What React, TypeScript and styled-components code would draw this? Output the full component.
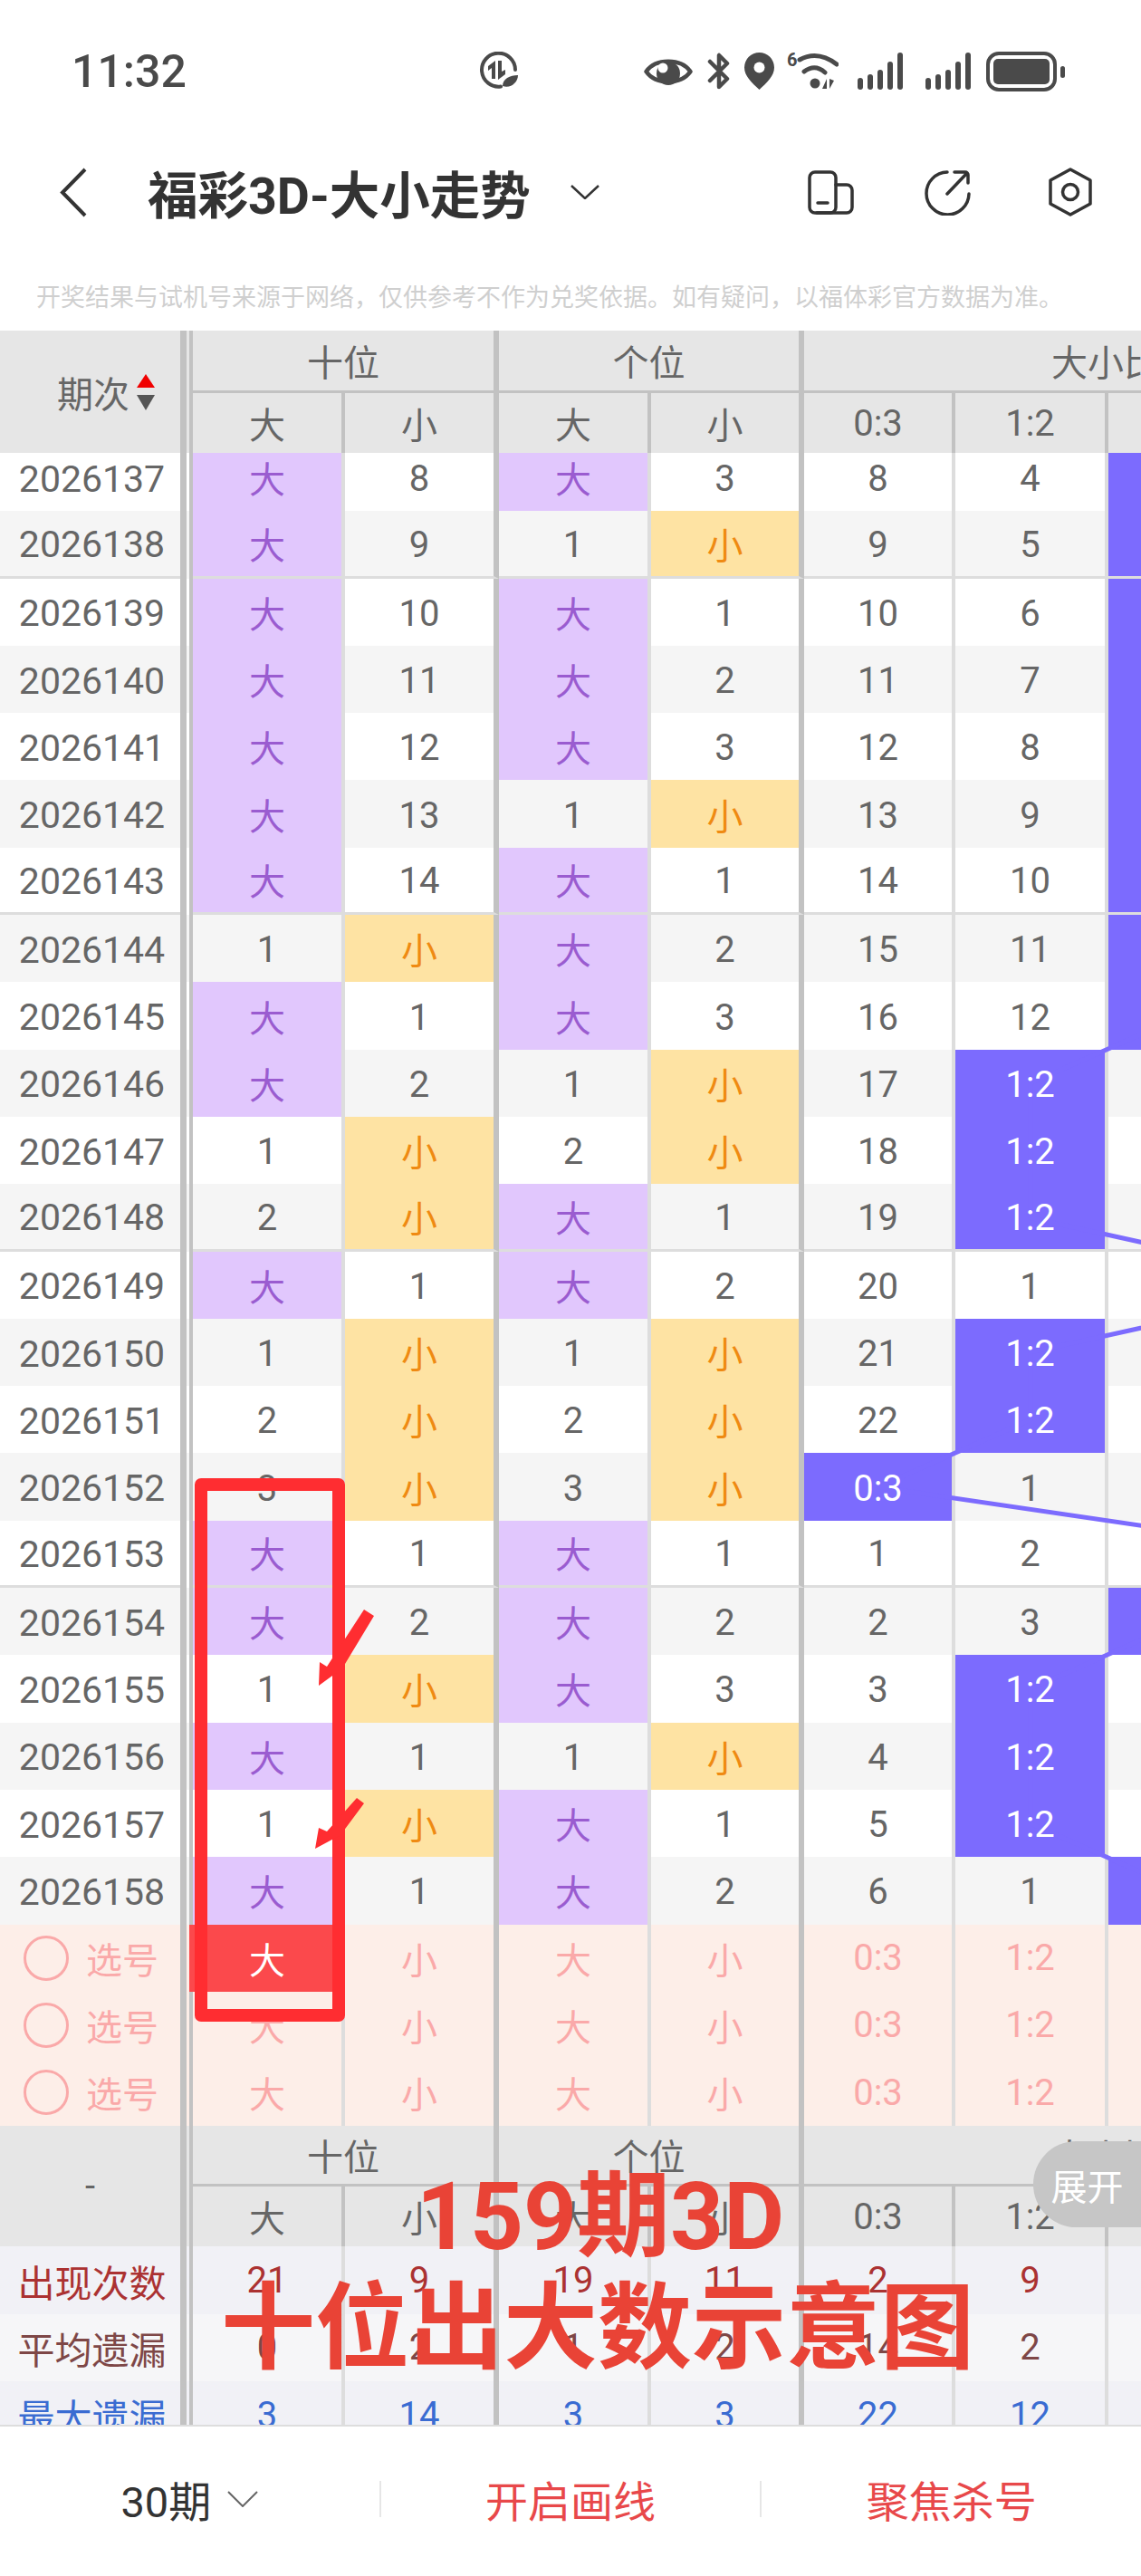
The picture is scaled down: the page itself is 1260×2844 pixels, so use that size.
import React from 'react';
import styled, {createGlobalStyle} from 'styled-components';

const GlobalStyle = createGlobalStyle`
  html, body {
    margin: 0;
    padding: 0;
    background: #fff;
    font-family: Roboto, "Noto Sans CJK SC", sans-serif;
  }
`
const TRACKS = '199px 14px 168px 170px 168px 169px 167px 169px 168px 168px'
const ROW_H = 74.3

const Page = styled.div`
  position: relative;
  width: 1260px;
  height: 2844px;
  display: flex;
  flex-direction: column;
  overflow: hidden;
  background: #fff;
`
const StatusBar = styled.div`
  height: 157px;
  display: flex;
  align-items: center;
  padding: 0 84px 0 79px;
  color: #4a4a4a;
`
const Time = styled.div`
  font-size: 50px;
  font-weight: 500;
  line-height: 60px;
  width: 128px;
  white-space: nowrap;
`
const Recycle = styled.svg`
  margin-left: 322px;
  width: 44px;
  height: 44px;
`
const StatusIcons = styled.div`
  margin-left: auto;
  display: flex;
  align-items: center;
  gap: 16px;
`
const Nav = styled.div`
  height: 110px;
  display: flex;
  align-items: center;
  padding: 0 53px 0 66px;
`
const Title = styled.div`
  margin-left: 66px;
  font-size: 55.5px;
  font-weight: 700;
  color: #333;
  white-space: nowrap;
`
const NavActions = styled.div`
  margin-left: auto;
  display: flex;
  align-items: center;
`
const Notice = styled.div`
  height: 58px;
  padding: 30px 0 0 40px;
  margin-bottom: 10px;
  display: flex;
  align-items: center;
  font-size: 27px;
  color: #cfcfcf;
  white-space: nowrap;
`
const Table = styled.div`
  flex: 1;
  min-height: 0;
  overflow: hidden;
`
const HeadGrid = styled.div`
  position: relative;
  z-index: 5;
  display: grid;
  grid-template-columns: ${TRACKS};
  grid-template-rows: ${p => p.$top}px 66px;
  width: 1400px;
  background: #e6e6e6;
  color: #666;
  font-size: 40px;
`
const HeadLeft = styled.div`
  grid-row: span 2;
  display: flex;
  align-items: center;
  padding-left: ${p => p.$pad || 0}px;
  justify-content: ${p => (p.$pad ? 'flex-start' : 'center')};
  gap: 8px;
`
const Gutter = styled.div`
  box-sizing: border-box;
  border-left: 7px solid #c2c2c2;
  border-right: 4px solid #c2c2c2;
  grid-row: ${p => (p.$tall ? 'span 2' : 'auto')};
`
const Band = styled.div`
  grid-column: span ${p => p.$span};
  box-sizing: border-box;
  display: flex;
  align-items: center;
  justify-content: center;
  border-bottom: 3px solid #c2c2c2;
  border-right: 6px solid #c2c2c2;
`
const Sub = styled.div`
  box-sizing: border-box;
  display: flex;
  align-items: center;
  justify-content: center;
  border-right: ${p => (p.$thick ? '6px' : '4px')} solid #c2c2c2;
`
const Body = styled.div`
  position: relative;
  margin-top: -10px;
`
const ChartLine = styled.svg`
  position: absolute;
  left: 0;
  top: 0;
  z-index: 1;
`
const Row = styled.div`
  display: grid;
  grid-template-columns: ${TRACKS};
  width: 1400px;
  height: ${ROW_H}px;
  background: ${p => p.$bg};
  font-size: 40px;
`
const Period = styled.div`
  box-sizing: border-box;
  display: flex;
  align-items: center;
  justify-content: center;
  padding-left: 4px;
  padding-top: ${p => (p.$digit ? 3 : 0)}px;
  font-size: 41px;
  color: ${p => p.$color || '#666'};
  border-bottom: ${p => (p.$end ? '3px solid #ddd' : 'none')};
`
const TONES = {
    plain: {bg: 'transparent', fg: '#666'},
    big: {bg: '#e1c7fd', fg: '#9a5cd0'},
    small: {bg: '#fee3a3', fg: '#ef8a12'},
    ratio: {bg: '#7c6bfe', fg: '#fff'},
    picked: {bg: '#fb494c', fg: '#fff'},
}
const Cell = styled.div`
  box-sizing: border-box;
  display: flex;
  align-items: center;
  justify-content: center;
  padding-top: ${p => (p.$digit ? 3 : 0)}px;
  background: ${p => TONES[p.$tone].bg};
  color: ${p => p.$color || TONES[p.$tone].fg};
  border-right: ${p => (p.$thick ? '6px solid #c2c2c2' : '4px solid #ddd')};
  border-bottom: ${p => (p.$end ? '3px solid #ddd' : 'none')};
  box-shadow: ${p => (p.$tone === 'picked' ? '-4px 0 0 #fb494c' : 'none')};
  >span {
    position: relative;
    z-index: 2;
  }
`
const PickLabel = styled.div`
  display: flex;
  align-items: center;
  gap: 19px;
  padding-left: 26px;
  color: #faa9a9;
  font-size: 40px;
`
const Ring = styled.div`
  box-sizing: border-box;
  width: 50px;
  height: 50px;
  border-radius: 50%;
  border: 3px solid #faa9a9;
`
const BottomBar = styled.div`
  position: relative;
  z-index: 6;
  flex: none;
  box-sizing: border-box;
  height: 167px;
  padding-bottom: 6px;
  border-top: 2px solid #ddd;
  background: #fff;
  display: flex;
  align-items: center;
`
const BottomItem = styled.div`
  flex: 1;
  display: flex;
  align-items: center;
  justify-content: center;
  gap: 18px;
  font-size: 47px;
  color: ${p => p.$color};
`
const Divider = styled.div`
  width: 2px;
  height: 40px;
  background: #e6e6e6;
`
const RedBox = styled.div`
  position: absolute;
  z-index: 7;
  left: 215px;
  top: 1632px;
  width: 166px;
  height: 600px;
  box-sizing: border-box;
  border: 14px solid #ff2d31;
  border-radius: 7px;
`
const Marks = styled.svg`
  position: absolute;
  z-index: 7;
  left: 0;
  top: 0;
`
const Caption = styled.div`
  position: absolute;
  z-index: 7;
  left: 240px;
  top: 2388px;
  width: 840px;
  text-align: center;
  color: #e94336;
  font-weight: 700;
`
const CaptionLine = styled.div`
  font-size: ${p => p.$size}px;
  line-height: ${p => p.$lh}px;
  white-space: nowrap;
`
const Expand = styled.div`
  position: absolute;
  z-index: 6;
  right: 0;
  top: 2364px;
  width: 119px;
  height: 95px;
  border-radius: 48px 0 0 48px;
  background: #c6c6c6;
  color: #fff;
  font-size: 40px;
  display: flex;
  align-items: center;
  justify-content: center;
`

// 走势数据：十位大小 个位大小 0:3 1:2 2:1 3:0
const RAW = [
    '大 8 大 3 8 4 2:1 1',
    '大 9 1 小 9 5 2:1 2',
    '大 10 大 1 10 6 2:1 3',
    '大 11 大 2 11 7 2:1 4',
    '大 12 大 3 12 8 2:1 5',
    '大 13 1 小 13 9 2:1 6',
    '大 14 大 1 14 10 2:1 7',
    '1 小 大 2 15 11 2:1 8',
    '大 1 大 3 16 12 2:1 9',
    '大 2 1 小 17 1:2 1 10',
    '1 小 2 小 18 1:2 2 11',
    '2 小 大 1 19 1:2 3 12',
    '大 1 大 2 20 1 4 3:0',
    '1 小 1 小 21 1:2 5 1',
    '2 小 2 小 22 1:2 6 2',
    '3 小 3 小 0:3 1 7 3',
    '大 1 大 1 1 2 8 3:0',
    '大 2 大 2 2 3 2:1 1',
    '1 小 大 3 3 1:2 1 2',
    '大 1 1 小 4 1:2 2 3',
    '1 小 大 1 5 1:2 3 4',
    '大 1 大 2 6 1 2:1 5',
].map(r => r.split(' '))

const COL_CENTER: {[K: number]: number} = {4: 970, 5: 1138, 6: 1306, 7: 1475}
const THICK = [false, true, false, true, false, false, false, false]
const PICK_VALUES = ['大', '小', '大', '小', '0:3', '1:2', '2:1', '3:0']
const STATS = [
    {label: '出现次数', color: '#ab3232', bg: '#f1f1f6', values: ['21', '9', '19', '11', '2', '9', '12', '8']},
    {label: '平均遗漏', color: '#7e4747', bg: '#f6f6f8', values: ['0', '2', '1', '2', '14', '2', '1', '2']},
    {label: '最大遗漏', color: '#3a6cd2', bg: '#f1f1f6', values: ['3', '14', '3', '3', '22', '12', '4', '9']},
]

const toneOf = (v: string) => {
    if (v === '大') return 'big'
    if (v === '小') return 'small'
    if (v.includes(':')) return 'ratio'
    return 'plain'
}
const isDigit = (v: string) => v !== '大' && v !== '小'

const linePoints = RAW.map((r, i) => {
    const col = [4, 5, 6, 7].find(c => r[c].includes(':')) as number
    return `${COL_CENTER[col]},${(i + 0.5) * ROW_H}`
}).join(' ')

const Head = ({top, left, pad}: {top: number; left: React.ReactNode; pad?: number}) => (
    <HeadGrid $top={top}>
        <HeadLeft $pad={pad}>{left}</HeadLeft>
        <Gutter $tall/>
        <Band $span={2}>十位</Band>
        <Band $span={2}>个位</Band>
        <Band $span={4}>大小比</Band>
        {PICK_VALUES.map((v, i) => <Sub key={i} $thick={THICK[i]}>{v}</Sub>)}
    </HeadGrid>
)

const SortArrows = () => (
    <svg width="20" height="40" viewBox="0 0 20 40">
        <path d="M10 0 L20 15 H0 Z" fill="#f00000"/>
        <path d="M0 23 H20 L10 40 Z" fill="#555"/>
    </svg>
)

const SignalBars = ({style}: {style: React.CSSProperties}) => (
    <svg width="51" height="41" viewBox="0 0 51 41" style={style}>
        {[13, 17, 22, 31, 41].map((h, i) => (
            <rect key={i} x={i * 11} y={41 - h} width="6" height={h} rx="3" fill="#4a4a4a"/>
        ))}
    </svg>
)

const StatusGlyphs = () => (
    <StatusIcons>
        <svg width="54" height="36" viewBox="0 0 54 36">
            <path d="M2.5 18 C13 3 41 3 51.500 18 C41 33 13 33 2.500 18 Z" fill="none" stroke="#4a4a4a" strokeWidth="4.500" strokeLinejoin="round"/>
            <circle cx="27" cy="20" r="13" fill="#4a4a4a"/>
            <circle cx="21" cy="14" r="5.500" fill="#fff"/>
        </svg>
        <svg width="25" height="41" viewBox="0 0 25 41">
            <path d="M3 31 L22 12 L13 3 V16 M13 25 V38 L22 29 L15 22 M3 10 L13 20" fill="none" stroke="#4a4a4a" strokeWidth="4.500" strokeLinecap="round" strokeLinejoin="round"/>
        </svg>
        <svg width="33" height="41" viewBox="0 0 33 41">
            <path d="M16.500 41 C8 33 0 26 0 16.500 A16.500 16.500 0 0 1 33 16.500 C33 26 25 33 16.500 41 Z" fill="#4a4a4a"/>
            <circle cx="16.500" cy="16.500" r="6" fill="#fff"/>
        </svg>
        <svg width="57" height="44" viewBox="0 0 57 44" style={{marginLeft: -2}}>
            <text x="0" y="16" fontSize="20" fontWeight="700" fill="#4a4a4a" fontFamily="Roboto">6</text>
            <path d="M14 9 Q34 -2 55 14 M19 22 Q31 13 42 23" fill="none" stroke="#4a4a4a" strokeWidth="5" strokeLinecap="round"/>
            <circle cx="31" cy="35" r="5.500" fill="#4a4a4a"/>
            <path d="M44 30 V41 H39 Z M47 30 V41 L52 32 Z" fill="#4a4a4a"/>
        </svg>
        <SignalBars style={{marginLeft: 5}}/>
        <SignalBars style={{marginLeft: 8}}/>
        <svg width="87" height="44" viewBox="0 0 87 44">
            <rect x="2" y="2" width="74" height="40" rx="12" fill="none" stroke="#4a4a4a" strokeWidth="4"/>
            <rect x="8" y="8" width="62" height="28" rx="5" fill="#4a4a4a"/>
            <rect x="82" y="16" width="5" height="13" rx="2.500" fill="#4a4a4a"/>
        </svg>
    </StatusIcons>
)

function App() {
    return (
        <Page>
            <GlobalStyle/>
            <StatusBar>
                <Time>11:32</Time>
                <Recycle viewBox="0 0 44 44">
                    <path d="M40 20 A18.500 18.500 0 1 0 24 38.500" fill="none" stroke="#4a4a4a" strokeWidth="4" strokeLinecap="round"/>
                    <path d="M18 10 V30 H14 V18 L10 21 V16 Z M21 10 H25 V22 L29 20 V25 L21 31 Z" fill="#4a4a4a"/>
                    <path d="M26 38 C26 30 34 26 43 26 C43 34 35 41 26 38 Z" fill="#4a4a4a"/>
                </Recycle>
                <StatusGlyphs/>
            </StatusBar>
            <Nav>
                <svg width="31" height="55" viewBox="0 0 31 55">
                    <path d="M28 2 L3 27.500 L28 53" fill="none" stroke="#333" strokeWidth="4"/>
                </svg>
                <Title>福彩3D-大小走势</Title>
                <svg width="32" height="16" viewBox="0 0 32 16" style={{marginLeft: 44}}>
                    <path d="M1 1 L16 15 L31 1" fill="none" stroke="#333" strokeWidth="2.500"/>
                </svg>
                <NavActions>
                    <svg width="51" height="49" viewBox="0 0 51 49" fill="none" stroke="#333" strokeWidth="3.500" strokeLinecap="round">
                        <rect x="2" y="2" width="29" height="45" rx="6"/>
                        <path d="M31 16 H43 A6 6 0 0 1 49 22 V41 A6 6 0 0 1 43 47 H10 M11 36 H22"/>
                    </svg>
                    <svg width="51" height="51" viewBox="0 0 51 51" fill="none" stroke="#333" strokeWidth="3.500" strokeLinecap="round" style={{marginLeft: 78}}>
                        <path d="M25 3 A23.500 23.500 0 1 0 49 27 M33 3 H45 A3 3 0 0 1 48 6 V15 M25 27 L47 4"/>
                    </svg>
                    <svg width="50" height="54" viewBox="0 0 50 54" fill="none" stroke="#333" strokeWidth="3.500" strokeLinejoin="round" style={{marginLeft: 85}}>
                        <path d="M25 2 L47 14 V40 L25 52 L3 40 V14 Z"/>
                        <circle cx="25" cy="27" r="8.500"/>
                    </svg>
                </NavActions>
            </Nav>
            <Notice>开奖结果与试机号来源于网络，仅供参考不作为兑奖依据。如有疑问，以福体彩官方数据为准。</Notice>
            <Table>
                <Head top={69} pad={63} left={<><span>期次</span><SortArrows/></>}/>
                <Body>
                    <ChartLine width="1400" height="1640" viewBox="0 0 1400 1640">
                        <polyline points={linePoints} fill="none" stroke="#7c6bfe" strokeWidth="5"/>
                    </ChartLine>
                    {RAW.map((r, i) => {
                        const end = i < 20 && (i - 1) % 5 === 0
                        return (
                            <Row key={i} $bg={i % 2 ? '#f5f5f5' : '#fff'}>
                                <Period $digit $end={end}>{2026137 + i}</Period>
                                <Gutter/>
                                {r.map((v, c) => (
                                    <Cell key={c} $digit={isDigit(v)} $tone={toneOf(v)} $thick={THICK[c]} $end={end}><span>{v}</span></Cell>
                                ))}
                            </Row>
                        )
                    })}
                    {[0, 1, 2].map(i => (
                        <Row key={i} $bg="#fdeee8">
                            <PickLabel><Ring/>选号</PickLabel>
                            <Gutter/>
                            {PICK_VALUES.map((v, c) => (
                                <Cell key={c} $tone={i === 0 && c === 0 ? 'picked' : 'plain'} $color={i === 0 && c === 0 ? '#fff' : '#faa9a9'} $thick={THICK[c]}><span>{v}</span></Cell>
                            ))}
                        </Row>
                    ))}
                </Body>
                <Head top={67} left="-"/>
                {STATS.map(s => (
                    <Row key={s.label} $bg={s.bg}>
                        <Period $color={s.color}>{s.label}</Period>
                        <Gutter/>
                        {s.values.map((v, c) => (
                            <Cell key={c} $tone="plain" $color={s.color} $thick={THICK[c]}><span>{v}</span></Cell>
                        ))}
                    </Row>
                ))}
            </Table>
            <BottomBar>
                <BottomItem $color="#333">
                    <span>30期</span>
                    <svg width="34" height="18" viewBox="0 0 34 18">
                        <path d="M1 1 L17 17 L33 1" fill="none" stroke="#666" strokeWidth="2"/>
                    </svg>
                </BottomItem>
                <Divider/>
                <BottomItem $color="#e8484a">开启画线</BottomItem>
                <Divider/>
                <BottomItem $color="#e8484a">聚焦杀号</BottomItem>
            </BottomBar>
            <Expand>展开</Expand>
            <RedBox/>
            <Marks width="1260" height="2844" viewBox="0 0 1260 2844">
                <polygon points="402,1777 413,1784 378,1842 352,1861 353,1835 361,1840" fill="#ff2d31"/>
                <polygon points="394,1985 402,1991 376,2026 348,2041 352,2018 361,2022" fill="#ff2d31"/>
            </Marks>
            <Caption>
                <CaptionLine $size={103} $lh={120} style={{paddingLeft: 6}}>159期3D</CaptionLine>
                <CaptionLine $size={104} $lh={128}>十位出大数示意图</CaptionLine>
            </Caption>
        </Page>
    );
}
export default App;
